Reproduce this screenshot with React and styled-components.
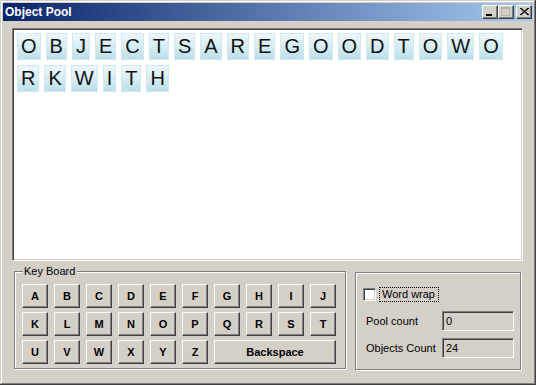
import React, { useState } from 'react';
import styled, { createGlobalStyle } from 'styled-components';

const GlobalStyle = createGlobalStyle`
    html, body {
        margin: 0;
        padding: 0;
        background: #d4d0c8;
    }
    body {
        font-family: "Liberation Sans", Arial, sans-serif;
    }
`;

const TEXT = 'OBJECTSAREGOODTOWORKWITH';
const KEYS = ['ABCDEFGHIJ', 'KLMNOPQRST', 'UVWXYZ'];

const Window = styled.div`
    width: 536px;
    height: 385px;
    box-sizing: border-box;
    padding: 3px;
    background: #d4d0c8;
    display: flex;
    flex-direction: column;
    box-shadow: inset -1px -1px 0 #404040, inset 1px 1px 0 #d4d0c8,
        inset -2px -2px 0 #808080, inset 2px 2px 0 #ffffff;
`;

const TitleBar = styled.div`
    height: 18px;
    flex: none;
    display: flex;
    align-items: center;
    padding: 0 1px 0 2px;
    background: linear-gradient(to right, #0a246a, #a6caf0);
`;

const Title = styled.span`
    flex: 1;
    color: #ffffff;
    font-size: 12px;
    font-weight: bold;
`;

const CaptionButton = styled.button`
    width: 16px;
    height: 14px;
    padding: 0;
    margin-left: ${p => (p.$spaced ? '2px' : '0')};
    display: flex;
    align-items: center;
    justify-content: center;
    background: #d4d0c8;
    border: 1px solid;
    border-color: #ffffff #404040 #404040 #ffffff;
    box-shadow: inset -1px -1px 0 #808080;
`;

const Client = styled.div`
    flex: 1;
    padding: 7px 0 0 9px;
`;

const Board = styled.div`
    width: 511px;
    height: 233px;
    box-sizing: border-box;
    padding: 4px;
    background: #ffffff;
    border: 1px solid;
    border-color: #808080 #ffffff #ffffff #808080;
    box-shadow: inset 1px 1px 0 #404040, inset -1px -1px 0 #d4d0c8;
    display: flex;
    flex-wrap: wrap;
    align-content: flex-start;
    gap: 5px;
`;

const Tile = styled.span`
    height: 27px;
    box-sizing: border-box;
    padding: 0 3px;
    border: 1px solid #cfe8f1;
    background: linear-gradient(to bottom, #eef7fa 0%, #d6edf4 50%, #bcdfeb 100%);
    color: #111111;
    font-size: 20px;
    line-height: 25px;
`;

const Groups = styled.div`
    display: flex;
    gap: 9px;
    margin: 10px 0 0 2px;
`;

const GroupBox = styled.div`
    position: relative;
    width: ${p => p.$width}px;
    height: 98px;
    box-sizing: border-box;
    margin-top: ${p => p.$offset || 0}px;
    border: 1px solid #808080;
    box-shadow: 1px 1px 0 #ffffff, inset 1px 1px 0 #ffffff;
`;

const GroupCaption = styled.span`
    position: absolute;
    top: -7px;
    left: 8px;
    padding: 0 2px 0 1px;
    background: #d4d0c8;
    font-size: 11px;
    line-height: 13px;
    color: #000000;
`;

const KeyGrid = styled.div`
    display: grid;
    grid-template-columns: repeat(10, 26px);
    grid-auto-rows: 24px;
    column-gap: 6px;
    row-gap: 4px;
    padding: 12px 0 0 7px;
`;

const Key = styled.button`
    grid-column: ${p => (p.$wide ? 'span 4' : 'auto')};
    padding: 0;
    background: #d4d0c8;
    border: 1px solid;
    border-color: #ffffff #404040 #404040 #ffffff;
    box-shadow: inset -1px -1px 0 #808080;
    font-family: "Liberation Sans", Arial, sans-serif;
    font-size: 11px;
    font-weight: bold;
    color: #000000;
`;

const Options = styled.div`
    display: flex;
    flex-direction: column;
    padding: 14px 0 0 7px;
`;

const CheckRow = styled.label`
    display: flex;
    align-items: center;
    gap: 3px;
    margin-bottom: 9px;
`;

const CheckBox = styled.span`
    width: 13px;
    height: 13px;
    box-sizing: border-box;
    background: #ffffff;
    border: 1px solid;
    border-color: #808080 #ffffff #ffffff #808080;
    box-shadow: inset 1px 1px 0 #404040, inset -1px -1px 0 #d4d0c8;
    display: flex;
    align-items: center;
    justify-content: center;
`;

const FocusLabel = styled.span`
    padding: 0 3px 0 2px;
    border: 1px dotted #000000;
    font-size: 11px;
    line-height: 13px;
`;

const FieldRow = styled.div`
    display: flex;
    align-items: center;
    margin-bottom: 7px;
`;

const FieldLabel = styled.span`
    width: 79px;
    padding-left: 3px;
    box-sizing: border-box;
    font-size: 11px;
`;

const ReadOnlyBox = styled.span`
    width: 72px;
    height: 20px;
    box-sizing: border-box;
    padding: 3px 0 0 3px;
    background: #d4d0c8;
    border: 1px solid;
    border-color: #808080 #ffffff #ffffff #808080;
    box-shadow: inset 1px 1px 0 #404040, inset -1px -1px 0 #d4d0c8;
    font-size: 11px;
    line-height: 13px;
`;

function App() {
    const [wrap, setWrap] = useState(false);

    return (
        <Window>
            <GlobalStyle />
            <TitleBar>
                <Title>Object Pool</Title>
                <CaptionButton aria-label="Minimize">
                    <svg width="14" height="12" viewBox="0 0 14 12">
                        <rect x="3" y="8" width="6" height="2" fill="#000" />
                    </svg>
                </CaptionButton>
                <CaptionButton aria-label="Maximize">
                    <svg width="14" height="12" viewBox="0 0 14 12">
                        <path d="M2.5 1.5h8v8h-8z" fill="none" stroke="#b8b4ac" />
                        <rect x="2" y="1" width="9" height="2" fill="#b8b4ac" />
                    </svg>
                </CaptionButton>
                <CaptionButton $spaced aria-label="Close">
                    <svg width="14" height="12" viewBox="0 0 14 12">
                        <path d="M3 2l8 7M4 2l8 7M11 2l-8 7M12 2l-8 7" stroke="#000" strokeWidth="1" />
                    </svg>
                </CaptionButton>
            </TitleBar>

            <Client>
                <Board>
                    {TEXT.split('').map((ch, i) => <Tile key={i}>{ch}</Tile>)}
                </Board>

                <Groups>
                    <GroupBox $width={332}>
                        <GroupCaption>Key Board</GroupCaption>
                        <KeyGrid>
                            {KEYS.join('').split('').map(ch => <Key key={ch}>{ch}</Key>)}
                            <Key $wide>Backspace</Key>
                        </KeyGrid>
                    </GroupBox>

                    <GroupBox $width={166} $offset={1}>
                        <Options>
                            <CheckRow onClick={() => setWrap(!wrap)}>
                                <CheckBox>
                                    {wrap && (
                                        <svg width="7" height="7" viewBox="0 0 7 7">
                                            <path d="M0 3l2 2 5-5" stroke="#000" strokeWidth="2" fill="none" />
                                        </svg>
                                    )}
                                </CheckBox>
                                <FocusLabel>Word wrap</FocusLabel>
                            </CheckRow>
                            <FieldRow>
                                <FieldLabel>Pool count</FieldLabel>
                                <ReadOnlyBox>0</ReadOnlyBox>
                            </FieldRow>
                            <FieldRow>
                                <FieldLabel>Objects Count</FieldLabel>
                                <ReadOnlyBox>24</ReadOnlyBox>
                            </FieldRow>
                        </Options>
                    </GroupBox>
                </Groups>
            </Client>
        </Window>
    );
}

export default App;
